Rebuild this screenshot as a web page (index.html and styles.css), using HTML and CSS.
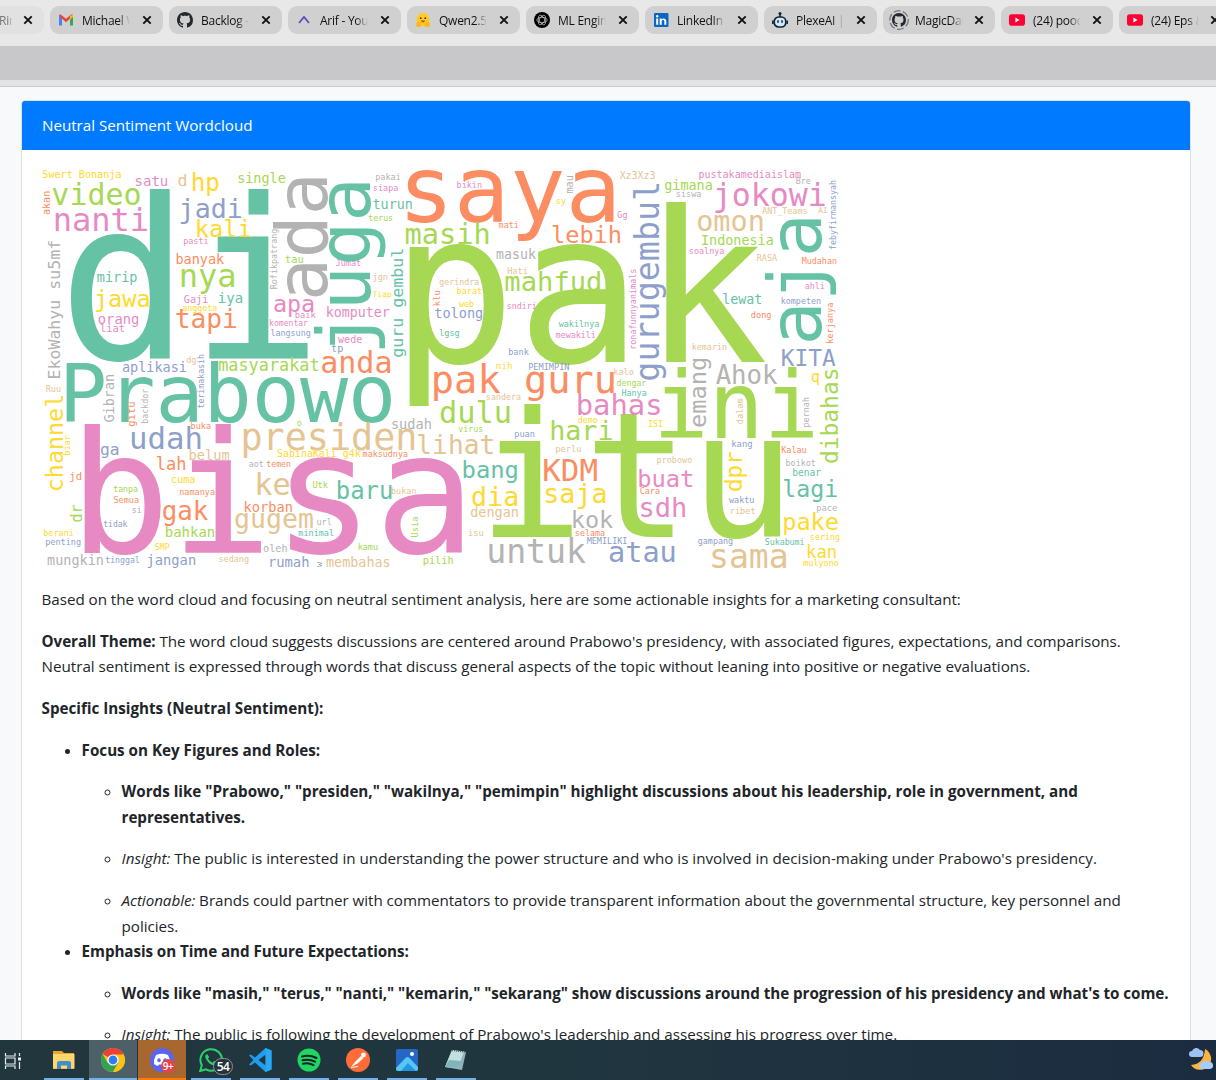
FILE: index.html
```html
<!DOCTYPE html>
<html lang="en">
<head>
<meta charset="utf-8">
<title>Neutral Sentiment Wordcloud</title>
<link rel="stylesheet" href="styles.css">
</head>
<body>
<svg class="defs" aria-hidden="true">
  <symbol id="close" viewBox="0 0 10 10"><path d="M1.3 1.3l7.4 7.4M8.7 1.3L1.3 8.7" stroke="#111" stroke-width="1.9" fill="none"/></symbol>
  <symbol id="github" viewBox="0 0 16 16"><path d="M8 0C3.58 0 0 3.58 0 8c0 3.54 2.29 6.53 5.47 7.59.4.07.55-.17.55-.38 0-.19-.01-.82-.01-1.49-2.01.37-2.53-.49-2.69-.94-.09-.23-.48-.94-.82-1.13-.28-.15-.68-.52-.01-.53.63-.01 1.08.58 1.23.82.72 1.21 1.87.87 2.33.66.07-.52.28-.87.51-1.07-1.78-.2-3.64-.89-3.64-3.95 0-.87.31-1.59.82-2.15-.08-.2-.36-1.02.08-2.12 0 0 .67-.21 2.2.82.64-.18 1.32-.27 2-.27s1.36.09 2 .27c1.53-1.04 2.2-.82 2.2-.82.44 1.1.16 1.92.08 2.12.51.56.82 1.27.82 2.15 0 3.07-1.87 3.75-3.65 3.95.29.25.54.73.54 1.48 0 1.07-.01 1.93-.01 2.2 0 .21.15.46.55.38A8.01 8.01 0 0 0 16 8c0-4.42-3.58-8-8-8z" fill="#24292f"/></symbol>
  <symbol id="youtube" viewBox="0 0 16 16"><rect y="2.3" width="16" height="11.4" rx="2.8" fill="#ff0033"/><path d="M6.4 5.6v4.8L10.600 8z" fill="#fff"/></symbol>
</svg>

<nav class="tabs">
  <div class="tab tab-first"><span class="tab-title">Rin</span><svg class="close"><use href="#close"/></svg></div>
  <div class="tab"><svg class="fav" viewBox="0 0 16 16"><path d="M1 3v10.500h3V5z" fill="#4285f4"/><path d="M15 3v10.500h-3V5z" fill="#34a853"/><path d="M1 3.800Q1 2 3 2.700L8 6.800l5-4.100Q15 2 15 3.800L8 10.200z" fill="#ea4335"/><path d="M12 4l3-1.200V5l-3 2.700z" fill="#fbbc04"/></svg><span class="tab-title">Michael W</span><svg class="close"><use href="#close"/></svg></div>
  <div class="tab"><svg class="fav"><use href="#github"/></svg><span class="tab-title">Backlog - m</span><svg class="close"><use href="#close"/></svg></div>
  <div class="tab"><svg class="fav" viewBox="0 0 16 16"><path d="M3 11l5-6 5 6" fill="none" stroke="#5d4fc4" stroke-width="1.900"/></svg><span class="tab-title">Arif - YouT</span><svg class="close"><use href="#close"/></svg></div>
  <div class="tab"><svg class="fav" viewBox="0 0 16 16"><circle cx="8" cy="7.500" r="6.500" fill="#ffcb1f"/><circle cx="3.800" cy="12.400" r="2.600" fill="#ffb51c"/><circle cx="12.200" cy="12.400" r="2.600" fill="#ffb51c"/><circle cx="5.700" cy="6.200" r=".9" fill="#3a3b45"/><circle cx="10.300" cy="6.200" r=".9" fill="#3a3b45"/><path d="M5.600 8.600q2.400 3.600 4.800 0z" fill="#c0392b"/></svg><span class="tab-title">Qwen2.5-</span><svg class="close"><use href="#close"/></svg></div>
  <div class="tab"><svg class="fav" viewBox="0 0 16 16"><circle cx="8" cy="8" r="8" fill="#000"/><g fill="none" stroke="#d0d0d0" stroke-width=".7"><ellipse cx="8" cy="8" rx="5.200" ry="2.700"/><ellipse cx="8" cy="8" rx="5.200" ry="2.700" transform="rotate(60 8 8)"/><ellipse cx="8" cy="8" rx="5.200" ry="2.700" transform="rotate(120 8 8)"/></g></svg><span class="tab-title">ML Engine</span><svg class="close"><use href="#close"/></svg></div>
  <div class="tab"><svg class="fav" viewBox="0 0 16 16"><rect x="1" y="1" width="14.500" height="14" rx="1" fill="#0a66c2"/><path d="M3.200 6.500h2v6.300h-2zM6.700 6.500h1.900v1c1.200-1.900 4.700-1.400 4.700 1.600v3.700h-2V9.500c0-1.900-2.600-1.800-2.600 0v3.300h-2z" fill="#fff"/><circle cx="4.200" cy="4.300" r="1.200" fill="#fff"/></svg><span class="tab-title">LinkedIn S</span><svg class="close"><use href="#close"/></svg></div>
  <div class="tab"><svg class="fav" viewBox="0 0 16 16"><path d="M8 1v4M.8 8.500v3.500M15.200 8.500v3.500" stroke="#0e2233" stroke-width="1.500"/><circle cx="8" cy="1.500" r="1.500" fill="#0e2233"/><rect x="2.200" y="5" width="11.600" height="10" rx="4.500" fill="#cfeafd" stroke="#0e2233" stroke-width="1.700"/><path d="M6 8.200v2.600M10 8.200v2.600" stroke="#0e2233" stroke-width="1.500"/></svg><span class="tab-title">PlexeAI | P</span><svg class="close"><use href="#close"/></svg></div>
  <div class="tab narrow"><svg class="fav big" viewBox="0 0 20 20"><circle cx="10" cy="10" r="9.300" fill="none" stroke="#777" stroke-width="1.300" stroke-dasharray="7 2.500"/><use href="#github" x="3" y="3" width="14" height="14"/></svg><span class="tab-title">MagicDat</span><svg class="close"><use href="#close"/></svg></div>
  <div class="tab narrow"><svg class="fav"><use href="#youtube"/></svg><span class="tab-title">(24) pood</span><svg class="close"><use href="#close"/></svg></div>
  <div class="tab narrow"><svg class="fav"><use href="#youtube"/></svg><span class="tab-title">(24) Eps &amp;</span><svg class="close"><use href="#close"/></svg></div>
</nav>
<div class="toolbar"></div>

<main class="page">
  <section class="card">
    <header class="card-header">Neutral Sentiment Wordcloud</header>
    <div class="card-body">
      <svg class="cloud" id="cloud" viewBox="0 0 800 400" role="img" aria-label="Word cloud"></svg>
      <p class="snug">Based on the word cloud and focusing on neutral sentiment analysis, here are some actionable insights for a marketing consultant:</p>
      <p><span class="tight"><strong>Overall Theme:</strong> The word cloud suggests discussions are centered around Prabowo's presidency, with associated figures, expectations, and comparisons.</span><br><span class="slight">Neutral sentiment is expressed through words that discuss general aspects of the topic without leaning into positive or negative evaluations.</span></p>
      <p><strong>Specific Insights (Neutral Sentiment):</strong></p>
      <ul>
        <li>
          <p><strong>Focus on Key Figures and Roles:</strong></p>
          <ul>
            <li><p><strong>Words like "Prabowo," "presiden," "wakilnya," "pemimpin" highlight discussions about his leadership, role in government, and<br><span class="tight">representatives.</span></strong></p></li>
            <li><p><em>Insight:</em> The public is interested in understanding the power structure and who is involved in decision-making under Prabowo's presidency.</p></li>
            <li><p class="last snug"><em>Actionable:</em> Brands could partner with commentators to provide transparent information about the governmental structure, key personnel and<br>policies.</p></li>
          </ul>
        </li>
        <li>
          <p class="tight"><strong>Emphasis on Time and Future Expectations:</strong></p>
          <ul>
            <li><p class="snug"><strong>Words like "masih," "terus," "nanti," "kemarin," "sekarang" show discussions around the progression of his presidency and what's to come.</strong></p></li>
            <li><p><em>Insight:</em> The public is following the development of Prabowo's leadership and assessing his progress over time.</p></li>
          </ul>
        </li>
      </ul>
    </div>
  </section>
</main>

<footer class="taskbar">
  <div class="taskview"><svg width="18" height="16" viewBox="0 0 18 16"><path d="M1.500 0v3h9.500V0M1.500 16v-3h9.500v3M1.500 5h9.500v6H1.500zM15.500 0v3M15.500 9v7" fill="none" stroke="#e8eef0" stroke-width="1.200"/><rect x="14" y="4.500" width="3" height="3" fill="#e8eef0"/></svg></div>
  <div class="app"><svg viewBox="0 0 24 24"><path d="M1 3h9l2 2h10v16H1z" fill="#e8a92b"/><path d="M1 6h21.500v14.500H1z" fill="#ffd76a"/><path d="M5 21v-6q0-2 2-2h10q2 0 2 2v6h-4v-3.500H9V21z" fill="#3f8fd0"/></svg></div>
  <div class="app active"><svg viewBox="0 0 24 24"><circle cx="12" cy="12" r="12" fill="#fbc116"/><path d="M12 12L1.600 6A12 12 0 0 1 22.400 6z" fill="#ea4335"/><path d="M1.600 6A12 12 0 0 0 12 24l5.200-9L12 12 6.800 15z" fill="#31a352"/><path d="M12 6.500h10.600A12 12 0 0 1 12 24l5.200-9z" fill="#fbc116"/><circle cx="12" cy="12" r="5.600" fill="#fff"/><circle cx="12" cy="12" r="4.400" fill="#2d7df0"/></svg></div>
  <div class="app alert"><svg viewBox="0 0 24 24"><circle cx="12" cy="12" r="12" fill="#5865f2"/><path d="M6 7q6-2.500 12 0 2.500 4.500 2 9-2 1.500-4 2l-1-1.500H9L8 18q-2-.5-4-2-.5-4.500 2-9z" fill="#fff"/><ellipse cx="9" cy="12.200" rx="1.700" ry="2" fill="#5865f2"/><ellipse cx="15" cy="12.200" rx="1.700" ry="2" fill="#5865f2"/></svg><span class="badge red">9+</span></div>
  <div class="app"><svg viewBox="0 0 24 24"><path d="M1.200 23l1.600-5.800A10.800 10.800 0 1 1 7 21.400z" fill="none" stroke="#2bd366" stroke-width="2"/><path d="M8 6q-3 1.500-1 5 3 5.500 8 6.500 3 0 3-3l-3-1.500-1.500 1.700q-3-1.200-4.500-4.200L10.200 9z" fill="#2bd366"/></svg><span class="badge dark">54</span></div>
  <div class="app"><svg viewBox="0 0 24 24"><path d="M17.500 0L7 9.600 2.800 6.400 1 7.400 5.500 12 1 16.600l1.800 1L7 14.400 17.500 24l6-2.600V2.600zM17.800 6.500v11L10.500 12z" fill="#1f9cf0" fill-rule="evenodd"/><path d="M17.500 0l6 2.600v18.800l-6 2.600z" fill="#29a9f5"/></svg></div>
  <div class="app"><svg viewBox="0 0 24 24"><circle cx="12" cy="12" r="11.500" fill="#1ed760"/><path d="M5 8.500q7.500-2 14.500 1.500M5.500 12.300q6.500-1.700 12.500 1.400M6 15.800q5.500-1.300 10.500 1.300" fill="none" stroke="#14202a" stroke-width="2" stroke-linecap="round"/></svg></div>
  <div class="app"><svg viewBox="0 0 24 24"><circle cx="12" cy="12" r="12" fill="#ff6c37"/><path d="M5 19l4.500-5.500L15 8l2.500 2-6 5.500z" fill="#fff"/><circle cx="17.500" cy="7" r="2.400" fill="#fff"/><path d="M5 19.500l7-1" stroke="#fff"/></svg></div>
  <div class="app"><svg viewBox="0 0 24 24"><rect x="1" y="1" width="22" height="22" rx="2" fill="#2567c4"/><path d="M1 20L11 9.500q1.500-1.200 3 0L23 19v2q0 2-2 2H3q-2 0-2-2z" fill="#56c7f5"/><path d="M6 23l7-8 8 8z" fill="#2196e3"/><circle cx="17" cy="6" r="2" fill="#fff"/></svg></div>
  <div class="app"><svg viewBox="0 0 24 24"><path d="M8 2l14 2-4 18L1 19z" fill="#8fb4b8"/><path d="M8 2l12 1.500L14 20 1 19z" fill="#c4dfe0"/><path d="M5 12l12 1-3 7-13-1z" fill="#80b4bb"/><path d="M8 2.500l13 1.500" stroke="#59666a" stroke-width="1.500" stroke-dasharray="1 1"/></svg></div>
  <div class="weather"><svg width="26" height="24" viewBox="0 0 26 24"><path d="M17 2a11 11 0 1 1-14 16q13-1 14-16z" fill="#fbb53c"/><path d="M4 10a3 3 0 0 1 0-6 4.500 4.500 0 0 1 8-1 3.500 3.500 0 0 1 0 7z" fill="#9dc3f5"/><path d="M14 22a3 3 0 0 1 0-6 4 4 0 0 1 7-1 3.500 3.500 0 0 1 1 7z" fill="#a9cdfa"/></svg></div>
</footer>
<script src="words.js"></script>
</body>
</html>
```
FILE: styles.css
```css
* { box-sizing: border-box; }
body {
  margin: 0;
  width: 1216px;
  height: 1080px;
  display: flex;
  flex-direction: column;
  overflow: hidden;
  background: #f8f9fb;
  color: #212529;
  font-family: "Open Sans", "Noto Sans", sans-serif;
}
.defs { position: absolute; width: 0; height: 0; }

/* Browser tabs */
.tabs {
  flex: none;
  display: flex;
  gap: 6px;
  height: 46px;
  padding-top: 6px;
  background: #e8e8e8;
  overflow: hidden;
}
.tab {
  flex: none;
  width: 113px;
  height: 28px;
  display: flex;
  align-items: center;
  padding: 0 12px 0 8px;
  border-radius: 9px;
  background: #d0d0d0;
  font-size: 12px;
  letter-spacing: -0.25px;
  color: #111;
}
.tab-first { width: 44px; padding-left: 0; background: #e1e1e1; border-radius: 0 9px 9px 0; }
.tab-first .tab-title { width: 13px; margin-left: -1px; color: #777; }
.tab.narrow { width: 112px; }
.fav { flex: none; width: 16px; height: 16px; }
.fav.big { width: 20px; height: 20px; margin: 0 -2px; }
.tab-title {
  width: 48px;
  margin: 1px auto 0 8px;
  overflow: hidden;
  white-space: nowrap;
  -webkit-mask-image: linear-gradient(90deg, #000 75%, transparent);
  mask-image: linear-gradient(90deg, #000 75%, transparent);
}
.close { flex: none; width: 10px; height: 10px; margin-right: -1px; }
.toolbar {
  flex: none;
  height: 41px;
  background: #c8c8ca;
  border-bottom: 1px solid #c9cacd;
  box-shadow: inset 0 -6px #e3e3e4;
}

/* Page content */
.page { flex: 1; min-height: 0; overflow: hidden; padding: 13px 25px 0 21px; }
.card { background: #fff; border: 1px solid #dfe1e4; border-radius: 4px; min-height: 1000px; }
.card-header {
  height: 49px;
  padding-left: 20px;
  background: #007bff;
  color: #fff;
  border-radius: 3px 3px 0 0;
  font-size: 15.2px;
  letter-spacing: -0.03px;
  line-height: 49px;
}
.card-body { padding: 20px 20px 20px 19.6px; font-size: 15.2px; line-height: 25.6px; white-space: nowrap; }
.cloud { display: block; width: 800px; height: 400px; margin: 0 0 17.2px 0.4px; overflow: visible; }
p { margin: 0 0 16px; }
p.last { margin: 0; }
ul { margin: 0; padding-left: 40px; }
strong { font-weight: 700; }
.slight { letter-spacing: -0.022px; }
.snug { letter-spacing: -0.045px; }
.tight { letter-spacing: -0.065px; }

/* Word cloud */
.cloud text { font-family: "DejaVu Sans Mono", monospace; white-space: pre; }
.teal { fill: #66c2a5; }
.orange { fill: #fc8d62; }
.blue { fill: #8da0cb; }
.pink { fill: #e78ac3; }
.green { fill: #a6d854; }
.yellow { fill: #ffd92f; }
.tan { fill: #e5c494; }
.gray { fill: #b3b3b3; }

/* Taskbar */
.taskbar {
  flex: none;
  display: flex;
  gap: 1px;
  height: 40px;
  background: linear-gradient(90deg, #21363d, #20363f 45%, #1b2c40);
}
.taskview { width: 39px; padding: 12px 0 0 4px; }
.app {
  position: relative;
  width: 48px;
  height: 40px;
  display: flex;
  justify-content: center;
  padding-top: 8px;
}
.app svg { width: 24px; height: 24px; }
.app::after { content: ""; position: absolute; left: 4px; right: 4px; bottom: 0; height: 2px; background: #76b0e6; }
.app.active { background: #4d6068; }
.app.alert { background: #a8672f; }
.app.active::after, .app.alert::after { left: 0; right: 0; }
.app.alert::after { background: #ff7b00; }
.badge {
  position: absolute;
  color: #fff;
  font-weight: 600;
  text-align: center;
}
.badge.red { left: 23px; top: 19px; width: 14px; height: 14px; border-radius: 7px; background: #e5434b; font-size: 10px; line-height: 14px; letter-spacing: -0.5px; }
.badge.dark { left: 26px; top: 18px; width: 20px; height: 17px; border-radius: 9px; background: #25333a; border: 1px solid #88949a; font-size: 12px; line-height: 15px; letter-spacing: -0.5px; }
.weather { margin: 7px 2px 0 auto; }
```
FILE: words.js
```js
// Horizontal words: text, colour, left edge, right edge, baseline, optional top edge.
const across = [
  ["di","teal",71,308,359,190],["pak","green",409,765.7,361.7,202],["saya","orange",407.3,613.7,222],
  ["itu","green",492.7,780.3,537,403.7],["ini","green",661,813,438.3,368],["bisa","pink",84,462.3,553.3,425],
  ["Prabowo","teal",66.7,391.3,421.7],["Swert Bonanja","yellow",43,120.7,178],["satu","pink",136,167,186],
  ["d","tan",178.5,186,186],["hp","yellow",193,218.5,190.5],["single","green",238.5,285,182.5],
  ["video","green",52.7,139.7,204.7],["nanti","pink",55.7,147,230.5],["jadi","blue",181,241,218.3],
  ["kali","yellow",197.5,250.3,237],["pasti","pink",184,208,243.5],["banyak","orange",176.7,224,263.7],
  ["nya","green",181.7,234,287],["mirip","teal",97.5,136.7,281.7],["jawa","yellow",96,148.7,306.7],
  ["orang","pink",98.7,138,323.7],["liat","pink",100.7,124,331.7],["Gaji","pink",184.3,207.7,302.7],
  ["iya","teal",219,242,303],["anggota","yellow",182.7,216.7,311],["tapi","orange",176.3,236,328.3],
  ["tau","green",285.7,303,263],["apa","pink",274.3,313.3,312],["dg","tan",186.7,195.7,362.7],
  ["aplikasi","blue",122.7,186,371.7],["masyarakat","green",219,318,371.3],["pakai","gray",376,400.3,180.3],
  ["siapa","pink",373.7,397.7,190.7],["turun","teal",373.3,411.7,209],["terus","green",368.7,392.3,220.7],
  ["masih","green",406,488.3,244.3],["bikin","pink",457.3,481.3,188.3],["mati","orange",499,518.3,228.3],
  ["masuk","gray",496.7,535.7,258.7],["Jumat","pink",336,360.3,266.3],["jgn","tan",373.3,387.3,280],
  ["Tiap","yellow",372.7,391.3,297],["komputer","pink",327.3,389.3,317],["baik","pink",295.5,315.7,318],
  ["komentar","pink",270,307.7,326],["langsung","blue",271,310,336.3],["wede","pink",338,361.7,342.7],
  ["tp","blue",331.7,342.7,351.7],["anda","orange",322,390,373],["tolong","blue",435,482,318.3],
  ["gerindra","tan",439.7,478.7,285],["barat","yellow",457.3,481.3,294],["web","yellow",459,473.7,306.7],
  ["lgsg","teal",439.7,459,335.7],["mahfud","green",505.7,600,291],["Hati","tan",507.7,527.3,273.7],
  ["sndiri","pink",507.7,536.3,308.7],["wakilnya","teal",558.7,598.7,326.7],["mewakili","pink",556,595.3,337.7],
  ["bank","blue",509,528.7,354.7],["PEMIMPIN","blue",529,569,369.5],["nih","yellow",496.7,511.7,369.3],
  ["sy","yellow",556.7,565.7,203.7],["lebih","orange",552.7,620,242.7],["Xz3Xz3","tan",619.7,654.7,179.3],
  ["Gg","pink",617.3,626.7,217.7],["gimana","green",665,711.7,190.3],["siswa","gray",676.7,700.7,197.3],
  ["pustakamediaislam","pink",699.3,800.7,178],["Bre","gray",796.3,810.3,183.7],["jokowi","pink",715.7,824.7,205.7],
  ["ANT_Teams","tan",762.3,806.7,214.3],["AI","tan",818,826.7,212.7],["omon","tan",698,762.3,231],
  ["Indonesia","green",702.3,772.7,245],["soalnya","pink",689.7,723.7,253.7],["RASA","tan",757.3,777,261.3],
  ["Mudahan","orange",802,836.3,264],["ahli","pink",805.3,824.3,288.7],["kompeten","blue",781.7,820.3,303.7],
  ["lewat","teal",723.3,761,303.7],["dong","orange",751.3,770.7,318.3],["kemarin","tan",692.7,726.3,350.3],
  ["KITA","blue",782.3,835.3,366],["Ahok","gray",716,777.3,383.5],["q","yellow",811.7,818.7,382],
  ["kalo","tan",614.3,633.3,374.7],["dengar","green",617,646,385.7],["Hanya","teal",622,646,395.7],
  ["bahas","pink",578.3,659.7,415],["demo","yellow",578.3,597.3,422.7],["ISI","yellow",648.7,662.3,427.3],
  ["perlu","tan",556,580.7,451.7],["hari","green",551.7,611.7,439.7],["KDM","orange",544.3,596.7,480.7],
  ["saja","yellow",546,605.3,503],["kok","gray",573.5,613,528.3],["selama","orange",575.7,604.3,535.7],
  ["MEMILIKI","blue",587,626.7,544.3],["atau","blue",609.7,674.3,562],["probowo","tan",657.3,691.7,462.7],
  ["buat","pink",639.3,692,486.7],["Cara","orange",640.3,659.3,493.7],["sdh","pink",641.3,685,516.7],
  ["kang","blue",732.3,751.7,446.7],["waktu","blue",729,753.7,502.7],["ribet","tan",731.3,754.7,513.7],
  ["Kalau","orange",781.7,806,452.7],["boikot","gray",786.3,815,465.7],["benar","teal",793,820.7,476.3],
  ["lagi","teal",784,836.7,497],["pace","gray",817,836.7,510.7],["pake","yellow",784.3,837.7,529.7],
  ["sering","yellow",810.7,839.3,539.7],["Sukabumi","teal",765.3,804,545.3],["kan","yellow",808,835.7,558],
  ["mulyono","yellow",803.7,838.3,565.7],["gampang","blue",698.3,732.3,543.8],["sama","tan",712.3,786,568],
  ["Ruu","tan",46.3,60.3,392.3],["udah","blue",132,200.3,449],["buka","orange",191.3,210.3,429.3],
  ["o","green",297.3,301.3,426],["ga","blue",101,118.3,454.7],["belum","tan",189.7,229,460.3],
  ["lah","orange",157,185,470.3],["jd","orange",70.3,81.3,480.3],["presiden","tan",243.7,414.3,449.7],
  ["SabinaKali g4k","yellow",277.7,360.7,456.8],["aot","gray",249.3,263,466.7],["temen","orange",266.7,290.3,466.7],
  ["cuma","yellow",172,194.7,483],["tanpa","green",113.7,137.3,492],["namanya","orange",180,214.3,495.3],
  ["Semua","orange",114,138.3,502.7],["si","gray",132.7,141.3,512.7],["tidak","blue",103.7,127.3,527],
  ["ke","tan",257.7,289,495],["korban","orange",245,291.7,511.7],["gak","orange",163.3,208,520],
  ["gugem","tan",235.7,312.7,528.3],["bahkan","green",166,214,537],["berani","yellow",44,73.3,535.7],
  ["penting","blue",46,80.3,545],["SMP","yellow",155.3,169.3,550.3],["mungkin","gray",47.7,102.7,565],
  ["tinggal","blue",105.7,139,563],["jangan","blue",147.7,195,565],["sedang","tan",219.3,248.3,561.7],
  ["oleh","gray",263.7,286.7,552.3],["rumah","blue",270.3,308.3,566.7],["sudah","gray",392.3,430.7,428.7],
  ["dulu","green",440.7,509.3,423],["pak guru","orange",434.3,613.7,392.5],["sandera","tan",486.7,520.3,399.8],
  ["virus","green",458.7,482.3,431.7],["puan","blue",515,534.3,436.8],["lihat","tan",418.3,492.7,453.8],
  ["maksudnya","orange",363,407.3,456.8],["bang","teal",463.7,516.7,477.7],["Utk","green",313,328,488.3],
  ["baru","teal",338,391.3,499],["bukan","tan",391.7,415.7,494.3],["dia","yellow",472.7,517,506.3],
  ["dengan","tan",471,517.7,517.3],["url","gray",317.3,331,525.3],["minimal","teal",298.7,333.3,535.8],
  ["isu","tan",468.7,483,535.7],["kamu","green",358.7,377.3,550],["pilih","green",423.7,452.7,563.7],
  ["membahas","tan",326.7,389.3,566.7],["untuk","gray",489.3,585.7,562.8]
];

// Words that read upwards: text, colour, top edge, bottom edge, baseline.
const upward = [
  ["akan","orange",191.5,214.5,49.7],["EkoWahyu su5mf","gray",241,378,60],["Rofikpatrang","gray",229.3,288.7,277],
  ["terimakasih","blue",354.7,408,204],["ada","gray",178.3,296.7,326.7],["juga","teal",183.3,348.3,370],
  ["guru gembul","teal",249.3,356.7,403.3],["klu","orange",291,305.3,440],["mau","gray",176,193,573],
  ["aja","teal",219.3,341,821],["febyfirmansyah","blue",180.7,249.3,835.5],["kerjanya","orange",303.3,342.7,832.7],
  ["ronafunnyanimals","pink",269.3,348.3,636],["gurugembul","blue",184,379.7,658.5],["emang","gray",359,426.7,706],
  ["dibahas","green",369.7,462.7,838],["dalam","tan",398.7,423.7,743.3],["pernah","gray",397.7,426.7,809],
  ["dpr","yellow",452.3,490.7,742.3],["Gibran","gray",375,422,113.7],["channel","yellow",396,490,62.5],
  ["gitu","orange",402.3,426,134.7],["biar","yellow",435.3,455,69.7],["backdor","gray",389,423,148],
  ["dr","green",505,521.7,81.7],["Usia","green",517.3,537,417.7],["w","blue",562,567,322]
];

const ORIGIN_X = 42;
const ORIGIN_Y = 170;
const cloud = document.getElementById("cloud");
const pen = document.createElement("canvas").getContext("2d");
pen.font = '200px "DejaVu Sans Mono"';

// Scales a word so that its ink spans exactly the given length.
function addWord(text, colour, length, height, place) {
  const m = pen.measureText(text);
  const size = 200 * length / (m.actualBoundingBoxRight + m.actualBoundingBoxLeft);
  const stretch = height ? height / (m.actualBoundingBoxAscent * size / 200) : 1;
  const offset = m.actualBoundingBoxLeft * size / 200;
  const node = document.createElementNS("http://www.w3.org/2000/svg", "text");
  node.textContent = text;
  node.setAttribute("class", colour);
  node.setAttribute("font-size", size.toFixed(2));
  node.setAttribute("x", offset.toFixed(2));
  node.setAttribute("transform", place + " scale(1 " + stretch.toFixed(3) + ")");
  cloud.appendChild(node);
}

for (const [text, colour, left, right, base, top] of across) {
  addWord(text, colour, right - left, top ? base - top : 0,
    `translate(${left - ORIGIN_X} ${base - ORIGIN_Y})`);
}
for (const [text, colour, top, bottom, base] of upward) {
  addWord(text, colour, bottom - top, 0,
    `translate(${base - ORIGIN_X} ${bottom - ORIGIN_Y}) rotate(-90)`);
}
```
